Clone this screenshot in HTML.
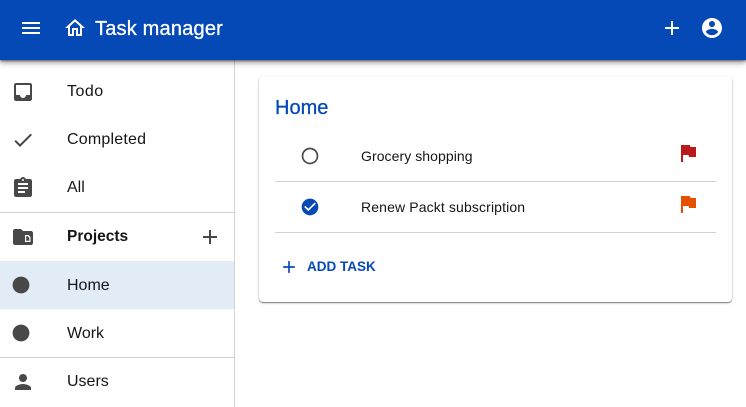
<!DOCTYPE html>
<html><head><meta charset="utf-8"><style>
*{box-sizing:border-box}
html,body{margin:0;padding:0;width:746px;height:407px;overflow:hidden;background:#fff;font-family:"Liberation Sans",sans-serif}
.a{position:absolute}
svg{position:absolute;display:block}
.t{position:absolute;white-space:nowrap;color:#151515;font-size:16px;line-height:20px}
</style></head><body>
<div class="a" style="left:234px;top:60px;width:1px;height:347px;background:#d4d4d4"></div>
<div class="a" style="left:0;top:261px;width:234px;height:48px;background:#e2ecf7"></div>
<div class="a" style="left:0;top:212px;width:234px;height:1px;background:#d0d0d0"></div>
<div class="a" style="left:0;top:357px;width:234px;height:1px;background:#d0d0d0"></div>

<div class="a" style="left:0;top:0;width:746px;height:60px;background:#0549b6;box-shadow:0 1px 2px rgba(0,0,0,.45),0 3px 5px rgba(0,0,0,.28),0 1px 10px rgba(0,0,0,.12)"></div>
<svg style="left:19px;top:16px" width="24" height="24" viewBox="0 0 24 24" fill="#fff"><path d="M3 18h18v-2H3v2zm0-5h18v-2H3v2zm0-7v2h18V6H3z"/></svg>
<svg style="left:63px;top:16px" width="24" height="24" viewBox="0 0 24 24" fill="#fff"><path d="M12 5.69l5 4.5V18h-2v-6H9v6H7v-7.81l5-4.5M12 3L2 12h3v8h6v-6h2v6h6v-8h3L12 3z"/></svg>
<div class="t" style="left:95px;top:18px;font-size:20px;line-height:22px;color:#fff;letter-spacing:.2px;-webkit-text-stroke:.3px #fff">Task manager</div>
<svg style="left:660px;top:16px" width="24" height="24" viewBox="0 0 24 24" fill="#fff"><path d="M19 13h-6v6h-2v-6H5v-2h6V5h2v6h6v2z"/></svg>
<svg style="left:700px;top:16px" width="24" height="24" viewBox="0 0 24 24" fill="#fff"><path d="M12 2C6.48 2 2 6.48 2 12s4.48 10 10 10 10-4.48 10-10S17.52 2 12 2zm0 3c1.66 0 3 1.34 3 3s-1.34 3-3 3-3-1.34-3-3 1.34-3 3-3zm0 14.2c-2.5 0-4.71-1.28-6-3.22.03-1.99 4-3.08 6-3.08 1.99 0 5.97 1.09 6 3.08-1.29 1.94-3.5 3.22-6 3.22z"/></svg>

<svg style="left:11px;top:80px" width="24" height="24" viewBox="0 0 24 24" fill="#484848"><path d="M19 3H5c-1.1 0-2 .9-2 2v14c0 1.1.9 2 2 2h14c1.1 0 2-.9 2-2V5c0-1.1-.9-2-2-2zm0 12h-4c0 1.66-1.34 3-3 3s-3-1.34-3-3H5V5h14v10z"/></svg>
<div class="t" style="left:67px;top:82px;letter-spacing:.5px">Todo</div>
<svg style="left:11px;top:128px" width="24" height="24" viewBox="0 0 24 24" fill="#484848"><path d="M9 16.17L4.83 12l-1.42 1.41L9 19 21 7l-1.41-1.41z"/></svg>
<div class="t" style="left:67px;top:130px;letter-spacing:.2px">Completed</div>
<svg style="left:11px;top:176px" width="24" height="24" viewBox="0 0 24 24" fill="#484848"><path d="M19 3h-4.18C14.4 1.84 13.3 1 12 1c-1.3 0-2.4.84-2.82 2H5c-1.1 0-2 .9-2 2v14c0 1.1.9 2 2 2h14c1.1 0 2-.9 2-2V5c0-1.1-.9-2-2-2zm-7 0c.55 0 1 .45 1 1s-.45 1-1 1-1-.45-1-1 .45-1 1-1zm2 14H7v-2h7v2zm3-4H7v-2h10v2zm0-4H7V7h10v2z"/></svg>
<div class="t" style="left:67px;top:178px">All</div>
<svg style="left:11px;top:225px" width="24" height="24" viewBox="0 0 24 24"><path fill="#484848" d="M10 4H4c-1.1 0-1.99.9-1.99 2L2 18c0 1.1.9 2 2 2h16c1.1 0 2-.9 2-2V8c0-1.1-.9-2-2-2h-8l-2-2z"/><path fill="#fff" d="M14 10h3.5l2 2v5H14z"/><path fill="#484848" d="M15.2 11.2h1.6l1.5 1.5v3.1h-3.1z"/></svg>
<div class="t" style="left:67px;top:227px;font-weight:700;font-size:15.5px">Projects</div>
<svg style="left:198px;top:225px" width="24" height="24" viewBox="0 0 24 24" fill="#484848"><path d="M19 13h-6v6h-2v-6H5v-2h6V5h2v6h6v2z"/></svg>
<svg style="left:9px;top:273px" width="24" height="24" viewBox="0 0 24 24" fill="#484848"><circle cx="12" cy="12" r="8.4"/></svg>
<div class="t" style="left:67px;top:276px">Home</div>
<svg style="left:9px;top:321px" width="24" height="24" viewBox="0 0 24 24" fill="#484848"><circle cx="12" cy="12" r="8.4"/></svg>
<div class="t" style="left:67px;top:324px">Work</div>
<svg style="left:11px;top:370px" width="24" height="24" viewBox="0 0 24 24" fill="#484848"><path d="M12 12c2.21 0 4-1.79 4-4s-1.79-4-4-4-4 1.79-4 4 1.79 4 4 4zm0 2c-2.67 0-8 1.34-8 4v2h16v-2c0-2.66-5.33-4-8-4z"/></svg>
<div class="t" style="left:67px;top:372px">Users</div>

<div class="a" style="left:259px;top:76px;width:473px;height:226px;background:#fff;border-radius:4px;box-shadow:0 1px 1px rgba(0,0,0,.45),0 1px 3px rgba(0,0,0,.14)"></div>
<div class="t" style="left:275px;top:96px;font-size:20px;line-height:24px;color:#0549b6;-webkit-text-stroke:.3px #0549b6">Home</div>
<svg style="left:300px;top:146px" width="20" height="20" viewBox="0 0 24 24" fill="#484848"><path d="M12 2C6.48 2 2 6.48 2 12s4.48 10 10 10 10-4.48 10-10S17.52 2 12 2zm0 18c-4.42 0-8-3.58-8-8s3.58-8 8-8 8 3.58 8 8-3.58 8-8 8z"/></svg>
<div class="t" style="left:361px;top:146px;font-size:14px;letter-spacing:.07px">Grocery shopping</div>
<svg style="left:676px;top:141px" width="24" height="24" viewBox="0 0 24 24" fill="#bb1a1a"><path d="M14.4 6L14 4H5v17h2v-7h5.6l.4 2h7V6z"/></svg>
<div class="a" style="left:275px;top:181px;width:441px;height:1px;background:#d0d0d0"></div>
<svg style="left:300px;top:197px" width="20" height="20" viewBox="0 0 24 24" fill="#0549b6"><path d="M12 2C6.48 2 2 6.48 2 12s4.48 10 10 10 10-4.48 10-10S17.52 2 12 2zm-2 15l-5-5 1.41-1.41L10 14.17l7.59-7.59L19 8l-9 9z"/></svg>
<div class="t" style="left:361px;top:197px;font-size:14px;letter-spacing:.13px">Renew Packt subscription</div>
<svg style="left:676px;top:192px" width="24" height="24" viewBox="0 0 24 24" fill="#e65100"><path d="M14.4 6L14 4H5v17h2v-7h5.6l.4 2h7V6z"/></svg>
<div class="a" style="left:275px;top:232px;width:441px;height:1px;background:#d0d0d0"></div>
<svg style="left:279px;top:257px" width="20" height="20" viewBox="0 0 24 24" fill="#0549b6"><path d="M19 13h-6v6h-2v-6H5v-2h6V5h2v6h6v2z"/></svg>
<div class="t" style="left:307px;top:257px;font-size:13.5px;font-weight:700;color:#0549b6">ADD TASK</div>
</body></html>
